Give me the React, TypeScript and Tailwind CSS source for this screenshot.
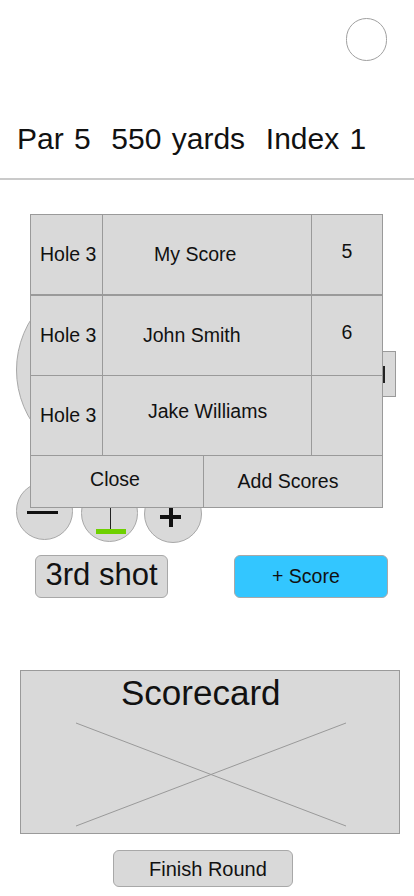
import React from "react";

const rows = [
  { name: "My Score", pl: "pl-[51px]", nameShift: "", score: "5" },
  { name: "John Smith", pl: "pl-[40px]", nameShift: "", score: "6" },
  { name: "Jake Williams", pl: "pl-[45px]", nameShift: "-mt-[8px]", score: "" },
];

function ScorePopup() {
  return (
    <div className="absolute left-[30px] top-[214px] w-[353px] border border-[#9a9a9a] bg-[#d9d9d9] text-[19.5px] text-[#111]">
      {rows.map((r, i) => (
        <div
          key={r.name}
          className={
            i === 0
              ? "flex h-[81px] border-b-2 border-[#9a9a9a]"
              : "flex h-[80px] border-b border-[#9a9a9a]"
          }
        >
          <div className="flex w-[72px] items-center border-r border-[#9a9a9a] pl-[9px]">Hole 3</div>
          <div className={`flex w-[209px] items-center border-r border-[#9a9a9a] ${r.pl}`}>
            <span className={r.nameShift}>{r.name}</span>
          </div>
          <div className="flex flex-1 items-center justify-center">
            <span className="-mt-[6px]">{r.score}</span>
          </div>
        </div>
      ))}
      <div className="flex h-[51px]">
        <div className="flex w-[173px] items-center justify-center border-r border-[#9a9a9a] pr-[4px]">
          <span className="-mt-[4px]">Close</span>
        </div>
        <div className="flex flex-1 items-center justify-center pr-[10px]">Add Scores</div>
      </div>
    </div>
  );
}

export default function App() {
  return (
    <div
      className="relative h-[896px] w-[414px] overflow-hidden bg-white text-[#111]"
      style={{ fontFamily: '"Liberation Sans", Arial, sans-serif' }}
    >
      {/* avatar */}
      <div className="flex justify-end pr-[27px] pt-[18px]">
        <div className="h-[43px] w-[41px] rounded-full border border-[#a0a0a0]" />
      </div>

      {/* hole info */}
      <div className="mt-[63px] h-[30px] whitespace-pre pl-[17px] text-[30px] leading-[30px] [word-spacing:2px]">
        Par 5  550 yards  Index 1
      </div>
      <div className="mt-[24px] h-[2px] bg-[#cacaca]" />

      {/* hole view */}
      <div className="mt-[94px] flex items-start justify-between pl-[16px] pr-[18px]">
        <div className="h-[192px] w-[192px] rounded-full border border-[#a8a8a8] bg-[#d9d9d9]" />
        <div className="mt-[77px] flex h-[46px] w-[40px] items-center border border-[#9a9a9a] bg-[#d9d9d9] pl-[26px]">
          <div className="h-[17px] w-[2px] bg-[#222]" />
        </div>
      </div>

      {/* club controls */}
      <div className="mt-[16px] flex h-[61px] items-start pl-[16px]">
        <div className="relative h-[58px] w-[57px] rounded-full border border-[#a8a8a8] bg-[#d9d9d9]">
          <div className="absolute left-[10px] top-[28px] h-[3px] w-[31px] bg-[#111]" />
        </div>
        <div className="relative ml-[8px] mt-[2px] h-[58px] w-[57px] rounded-full border border-[#a8a8a8] bg-[#d9d9d9]">
          <div className="absolute left-[28px] top-[14px] h-[34px] w-[1px] bg-[#222]" />
          <div className="absolute left-[14px] top-[44px] h-[5px] w-[30px] bg-[#6ed000]" />
        </div>
        <div className="relative ml-[6px] mt-[3px] h-[58px] w-[58px] rounded-full border border-[#a8a8a8] bg-[#d9d9d9]">
          <div className="absolute left-[15px] top-[29px] h-[4px] w-[21px] bg-[#111]" />
          <div className="absolute left-[23.5px] top-[20px] h-[21px] w-[4px] bg-[#111]" />
        </div>
      </div>

      {/* shot + score */}
      <div className="mt-[12px] flex items-center pl-[35px]">
        <div className="flex h-[43px] w-[133px] items-center justify-center rounded-[6px] border border-[#a8a8a8] bg-[#d9d9d9] text-[31px]">
          <span className="-mt-[3px]">3rd shot</span>
        </div>
        <div className="ml-[66px] flex h-[43px] w-[154px] items-center rounded-[6px] border border-[#a8a8a8] bg-[#33c6ff] pl-[37px] text-[19.5px]">
          + Score
        </div>
      </div>

      {/* scorecard */}
      <div className="relative ml-[20px] mt-[72px] h-[164px] w-[380px] border border-[#9a9a9a] bg-[#d9d9d9]">
        <svg className="absolute inset-0" width="378" height="162" viewBox="0 0 378 162">
          <line x1="55" y1="52" x2="325" y2="155" stroke="#999" strokeWidth="1" />
          <line x1="55" y1="155" x2="325" y2="52" stroke="#999" strokeWidth="1" />
        </svg>
        <div className="relative pl-[100px] pt-[4px] text-[35px] leading-[35px]">Scorecard</div>
      </div>

      <div className="ml-[113px] mt-[16px] flex h-[37px] w-[180px] items-center rounded-[6px] border border-[#a8a8a8] bg-[#d9d9d9] pl-[35px] text-[20px]">
        Finish Round
      </div>

      <ScorePopup />
    </div>
  );
}
